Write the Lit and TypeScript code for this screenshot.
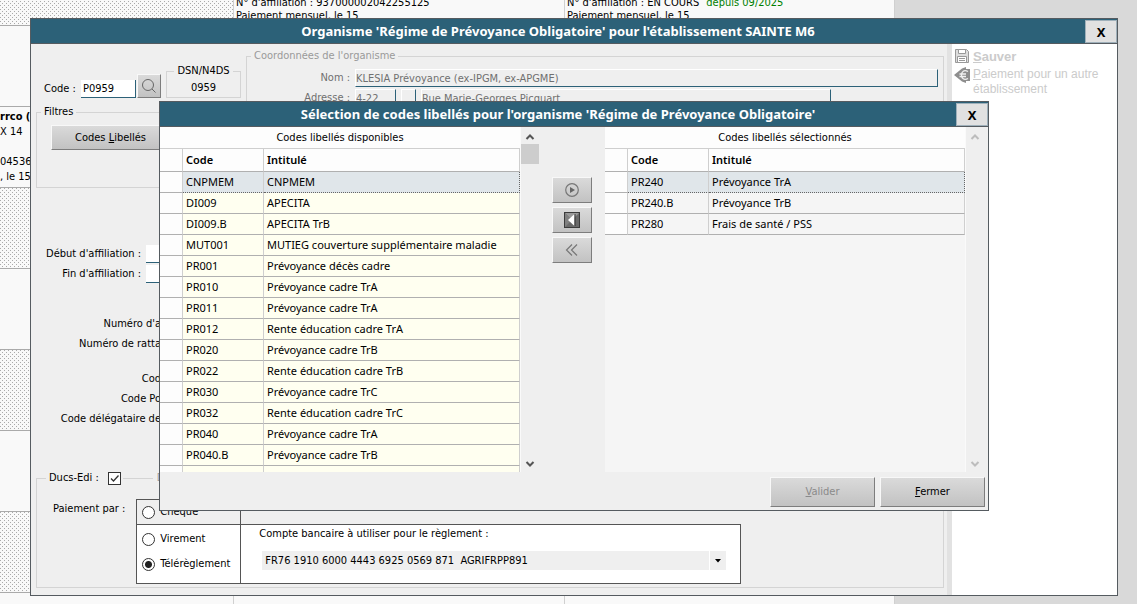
import { LitElement, html, css, nothing } from "lit";
import { customElement, property } from "lit/decorators.js";

type Row = [string, string];

const AVAILABLE: Row[] = [
  ["CNPMEM", "CNPMEM"],
  ["DI009", "APECITA"],
  ["DI009.B", "APECITA TrB"],
  ["MUT001", "MUTIEG couverture supplémentaire maladie"],
  ["PR001", "Prévoyance décès cadre"],
  ["PR010", "Prévoyance cadre TrA"],
  ["PR011", "Prévoyance cadre TrA"],
  ["PR012", "Rente éducation cadre TrA"],
  ["PR020", "Prévoyance cadre TrB"],
  ["PR022", "Rente éducation cadre TrB"],
  ["PR030", "Prévoyance cadre TrC"],
  ["PR032", "Rente éducation cadre TrC"],
  ["PR040", "Prévoyance cadre TrA"],
  ["PR040.B", "Prévoyance cadre TrB"],
  ["PR042", "Rente éducation cadre TrA"],
];

const SELECTED: Row[] = [
  ["PR240", "Prévoyance TrA"],
  ["PR240.B", "Prévoyance TrB"],
  ["PR280", "Frais de santé / PSS"],
];

const base = css`
  * { box-sizing: border-box; }
  button, input, select { font: inherit; color: inherit; margin: 0; border-radius: 0; }
  .push {
    border: 1px solid;
    border-color: #f8f8f8 #7d7d7d #7d7d7d #f8f8f8;
    background: linear-gradient(#dadada, #c2c2c2);
    padding: 0;
    display: flex;
    align-items: center;
    justify-content: center;
  }
  .titlebar {
    height: 25px;
    flex: none;
    display: flex;
    align-items: stretch;
    background: #2c6178;
    border-bottom: 1px solid #555b60;
    color: #fff;
  }
  .titlebar h1, .titlebar h2 {
    flex: 1;
    margin: 0;
    text-align: center;
    font: bold 13px/24px "Noto Sans", sans-serif;
  }
  .close {
    width: 32px;
    margin: 1px 0 0;
    padding: 0;
    border: 1px solid #9fb0ba;
    background: #e1e1e1;
    color: #000;
    font: bold 13px/20px "Noto Sans", sans-serif;
  }
`;

@customElement("code-grid")
class CodeGrid extends LitElement {
  @property() heading = "";
  @property({ attribute: false }) rows: Row[] = [];
  @property({ type: Boolean, reflect: true }) tinted = false;

  static styles = css`
    * { box-sizing: border-box; }
    :host { display: block; flex: 1; min-width: 0; overflow: hidden; background: #f5f5f5; border-right: 1px solid #fafafa; }
    table { width: 100%; table-layout: fixed; border-collapse: separate; border-spacing: 0; font: 11px/20px "Noto Sans", sans-serif; color: #000; }
    caption { height: 21px; background: #fdfdfd; font: 11px/21px "DejaVu Sans Condensed", "Noto Sans", sans-serif; }
    col.rail { width: 23px; }
    col.code { width: 81px; }
    th, td { padding: 0 0 0 3px; text-align: left; white-space: nowrap; overflow: hidden; border-right: 1px solid #cfcfcf; border-bottom: 1px solid #b0b0b0; }
    th { height: 24px; line-height: 20px; font-weight: 600; font-size: 11px; background: #fdfdfd; border-top: 1px solid #cfcfcf; }
    td { height: 21px; background: #f5f5f5; }
    td.rail, th.rail { background: #fdfdfd; }
    :host([tinted]) td:not(.rail) { background: #fffff0; }
    tr.current td:not(.rail), :host([tinted]) tr.current td:not(.rail) { background: #e0e6ea; border-bottom: 1px dotted #666; }
    tr.current td.end { border-right: 1px dotted #666; }
  `;

  render() {
    return html`<table>
      <caption>${this.heading}</caption>
      <colgroup><col class="rail" /><col class="code" /><col /></colgroup>
      <thead><tr><th class="rail"></th><th>Code</th><th>Intitulé</th></tr></thead>
      <tbody>
        ${this.rows.map(([code, label], i) => html`<tr class=${i === 0 ? "current" : ""}>
          <td class="rail"></td><td>${code}</td><td class="end">${label}</td>
        </tr>`)}
      </tbody>
    </table>`;
  }
}

@customElement("scroll-rail")
class ScrollRail extends LitElement {
  @property({ type: Boolean }) thumb = false;
  @property({ type: Boolean, reflect: true }) idle = false;

  static styles = css`
    :host { box-sizing: border-box; display: flex; flex-direction: column; align-items: center; width: 18px; flex: none; background: #efefef; color: #555; padding: 6px 0 4px; }
    :host([idle]) { color: #bdbdbd; }
    svg { display: block; flex: none; }
    .thumb { width: 18px; height: 20px; margin-top: 3px; background: #cdcdcd; }
    .space { flex: 1; }
  `;

  render() {
    return html`
      <svg width="10" height="8" viewBox="0 0 10 8"><path d="M1.5 6 5 2.5 8.500 6" fill="none" stroke="currentColor" stroke-width="2" /></svg>
      ${this.thumb ? html`<div class="thumb"></div>` : nothing}
      <div class="space"></div>
      <svg width="10" height="8" viewBox="0 0 10 8"><path d="M1.500 2 5 5.500 8.500 2" fill="none" stroke="currentColor" stroke-width="2" /></svg>
    `;
  }
}

@customElement("codes-dialog")
class CodesDialog extends LitElement {
  static styles = [base, css`
    :host { box-sizing: border-box; display: flex; flex-direction: column; border: 1px solid #555b60; background: #efefef; font: 11px/14px "DejaVu Sans Condensed", "Noto Sans", sans-serif; color: #000; }
    .lists { flex: 1; min-height: 0; display: flex; }
    .moves { width: 66px; flex: none; display: flex; flex-direction: column; gap: 4px; padding: 50px 13px 0; }
    .moves .push { width: 40px; height: 26px; }
    .right-rail { width: 22px; padding-right: 4px; }
    footer { display: flex; justify-content: flex-end; gap: 5px; padding: 5px 3px 3px; }
    footer .push { width: 105px; height: 30px; }
    footer .push:disabled { color: #8a8a8a; }
  `];

  render() {
    return html`
      <div class="titlebar">
        <h2>Sélection de codes libellés pour l'organisme 'Régime de Prévoyance Obligatoire'</h2>
        <button class="close" aria-label="Fermer la sélection">X</button>
      </div>
      <div class="lists">
        <code-grid tinted heading="Codes libellés disponibles" .rows=${AVAILABLE}></code-grid>
        <scroll-rail thumb></scroll-rail>
        <div class="moves">
          <button class="push" aria-label="Ajouter">
            <svg width="16" height="16" viewBox="0 0 16 16"><circle cx="8" cy="8" r="6.300" fill="none" stroke="#777" stroke-width="1.200" /><path d="M6 5v6l5-3z" fill="#666" /></svg>
          </button>
          <button class="push" aria-label="Retirer">
            <svg width="16" height="16" viewBox="0 0 16 16"><rect width="16" height="16" fill="#6a6a6a" /><path d="M0 0h16L8 8z" fill="#9a9a9a" /><path d="M0 0v16l8-8z" fill="#808080" /><rect x=".5" y=".5" width="15" height="15" fill="none" stroke="#3c3c3c" /><path d="M10.500 2v12L4 8z" fill="#fff" /><path d="M11 2v12" stroke="#333" /></svg>
          </button>
          <button class="push" aria-label="Tout retirer">
            <svg width="16" height="16" viewBox="0 0 16 16"><path d="M8 2.500 2.500 8 8 13.500M13 2.500 7.500 8 13 13.500" fill="none" stroke="#777" stroke-width="1.200" /></svg>
          </button>
        </div>
        <code-grid heading="Codes libellés sélectionnés" .rows=${SELECTED}></code-grid>
        <scroll-rail idle class="right-rail"></scroll-rail>
      </div>
      <footer>
        <button class="push" disabled><span><u>V</u>alider</span></button>
        <button class="push"><span><u>F</u>ermer</span></button>
      </footer>
    `;
  }
}

@customElement("organism-window")
class OrganismWindow extends LitElement {
  static styles = [base, css`
    :host { box-sizing: border-box; display: flex; flex-direction: column; border: 1px solid #555b60; background: #efefef; font: 11px/14px "DejaVu Sans Condensed", "Noto Sans", sans-serif; color: #000; white-space: nowrap; }
    .body { flex: 1; min-height: 0; display: flex; }
    .form { flex: 1; min-width: 0; display: flex; flex-direction: column; padding: 5px 3px 7px 5px; }
    .side { width: 170px; flex: none; background: #fff; border-left: 5px solid #e2e2e2; padding: 5px 0 0 2px; font: 12px/15px "Liberation Sans", sans-serif; color: #cbcbcb; }
    .side button { display: flex; gap: 3px; align-items: flex-start; padding: 0; border: 0; background: none; text-align: left; white-space: normal; }
    .side .save { font-size: 13px; font-weight: bold; height: 18px; }
    .side svg { flex: none; }
    fieldset { margin: 0; border: 1px solid #d4d4d4; padding: 0; min-width: 0; }
    legend { padding: 0 3px; }
    .top { display: flex; gap: 5px; }
    .ident { width: 205px; flex: none; padding-top: 15px; }
    .code-row { display: flex; align-items: flex-end; }
    .code-row label { width: 45px; padding: 0 0 2px 8px; }
    .edit { background: #fff; border: solid #2c6178; border-width: 0 1px 1px 0; padding: 0 0 0 2px; }
    .code-row .edit { width: 55px; height: 18px; }
    .code-row .push { width: 24px; height: 24px; margin-left: 1px; }
    .dsn { flex: 1; height: 34px; margin-left: 5px; padding-top: 3px; text-align: center; }
    .dsn legend { margin: 0 auto; }
    .filters { margin-top: 7px; height: 83px; padding: 6px 14px; }
    .filters legend { margin-left: -10px; }
    .filters .push { width: 119px; height: 25px; }
    .coord { flex: 1; height: 208px; padding-top: 6px; color: #707070; }
    .coord legend { margin-left: 4px; color: #9a9a9a; }
    .line { display: flex; padding-left: 28px; height: 20px; gap: 5px; padding-right: 5px; }
    .line label { width: 75px; text-align: right; padding: 2px 0 0 0; }
    .line .edit { background: #efefef; border-color: #fff #2c6178 #2c6178 #fff; border-width: 1px; height: 18px; color: #707070; padding: 0; }
    .grow { flex: 1; min-width: 0; }
    .number { width: 41px; }
    .bis { width: 15px; }
    .street { width: 410px; }
    .fields { margin-top: -13px; display: flex; flex-direction: column; gap: 1px; width: 250px; }
    .field { display: flex; align-items: center; height: 19px; gap: 5px; }
    .field label { width: 105px; text-align: right; }
    .field .edit { flex: 1; min-width: 0; height: 18px; }
    .field.long label { width: 125px; }
    .gap { margin-top: 30px; }
    .gap-small { margin-top: 15px; }
    .ducs { margin-top: auto; padding: 0 14px 3px 16px; }
    .ducs legend { display: flex; align-items: center; margin-left: -7px; }
    .ducs input { appearance: none; flex: none; background: #fff; border: 1px solid #333; display: grid; place-items: center; }
    .tick { width: 13px; height: 13px; }
    .check { display: grid; margin-left: 9px; }
    .check > * { grid-area: 1 / 1; }
    .dash { width: 30px; height: 1px; margin: 0 4px 0 2px; background: #d4d4d4; }
    .muted { color: #9a9a9a; }
    .pay { display: flex; gap: 11px; padding-top: 14px; }
    .pay > span { padding-top: 3px; }
    .choices { display: grid; grid-template-columns: 105px 500px; grid-template-rows: 25px 60px; }
    .cheque { border: solid #555; border-width: 1px 1px 0 1px; padding: 4px 0 0 5px; }
    .others { grid-row: 2; background: #fff; border: 1px solid #555; padding: 6px 0 0 5px; display: flex; flex-direction: column; gap: 9px; }
    .bank { grid-row: 2; grid-column: 2; background: #fff; border: 1px solid #555; border-left: 0; padding: 2px 14px 0 18px; }
    .radio { display: flex; align-items: center; gap: 5px; height: 16px; }
    .radio input { width: 13px; height: 13px; border-radius: 50%; }
    .radio input:checked { background: radial-gradient(circle, #222 0 3px, #fff 4px); }
    .combo { display: grid; margin: 10px 0 0 3px; height: 19px; }
    .combo > * { grid-area: 1 / 1; }
    select { appearance: none; width: 100%; border: 0; background: linear-gradient(90deg, #efefef calc(100% - 17px), #fff 0 calc(100% - 16px), #efefef 0); padding: 0 20px 0 3px; }
    .arrow { justify-self: end; align-self: center; margin-right: 5px; pointer-events: none; }
  `];

  render() {
    return html`
      <div class="titlebar">
        <h1>Organisme 'Régime de Prévoyance Obligatoire' pour l'établissement SAINTE M6</h1>
        <button class="close" aria-label="Fermer la fenêtre">X</button>
      </div>
      <div class="body">
        <div class="form">
          <div class="top">
            <div class="ident">
              <div class="code-row">
                <label for="code">Code :</label>
                <input id="code" class="edit" value="P0959" />
                <button class="push" aria-label="Rechercher">
                  <svg width="16" height="16" viewBox="0 0 16 16"><circle cx="7" cy="7" r="5.500" fill="none" stroke="#666" /><path d="m11 11 3.500 3.500" stroke="#666" /></svg>
                </button>
                <fieldset class="dsn"><legend>DSN/N4DS</legend>0959</fieldset>
              </div>
              <fieldset class="filters">
                <legend>Filtres</legend>
                <button class="push"><span>Codes <u>L</u>ibellés</span></button>
              </fieldset>
            </div>
            <fieldset class="coord">
              <legend>Coordonnées de l'organisme</legend>
              <div class="line">
                <label for="name">Nom :</label>
                <input id="name" class="edit grow" readonly value="KLESIA Prévoyance (ex-IPGM, ex-APGME)" />
              </div>
              <div class="line">
                <label for="number">Adresse :</label>
                <input id="number" class="edit number" readonly value="4-22" />
                <input class="edit bis" aria-label="Complément" readonly />
                <input class="edit street" aria-label="Voie" readonly value="Rue Marie-Georges Picquart" />
              </div>
            </fieldset>
          </div>
          <div class="fields">
            <div class="field"><label for="start">Début d'affiliation :</label><input id="start" class="edit" /></div>
            <div class="field"><label for="end">Fin d'affiliation :</label><input id="end" class="edit" /></div>
            <div class="field long gap"><label for="f1">Numéro d'a</label><input id="f1" class="edit" /></div>
            <div class="field long"><label for="f2">Numéro de ratta</label><input id="f2" class="edit" /></div>
            <div class="field long gap-small"><label for="f3">Cod</label><input id="f3" class="edit" /></div>
            <div class="field long"><label for="f4">Code Po</label><input id="f4" class="edit" /></div>
            <div class="field long"><label for="f5">Code délégataire de</label><input id="f5" class="edit" /></div>
          </div>
          <fieldset class="ducs">
            <legend>
              <label for="ducs">Ducs-Edi :</label>
              <span class="check">
                <input id="ducs" class="tick" type="checkbox" checked />
                <svg width="13" height="13" viewBox="0 0 13 13" pointer-events="none"><path d="M3 6.500 5.500 9 10.500 3.500" fill="none" stroke="#333" stroke-width="1.300" /></svg>
              </span>
              <span class="dash"></span><span class="muted">D</span>
            </legend>
            <div class="pay">
              <span>Paiement par :</span>
              <div class="choices">
                <div class="cheque"><label class="radio"><input type="radio" name="pay" />Chèque</label></div>
                <div class="others">
                  <label class="radio"><input type="radio" name="pay" />Virement</label>
                  <label class="radio"><input type="radio" name="pay" checked />Télérèglement</label>
                </div>
                <div class="bank">
                  <label for="bank">Compte bancaire à utiliser pour le règlement :</label>
                  <div class="combo">
                    <select id="bank"><option>FR76 1910 6000 4443 6925 0569 871&nbsp; AGRIFRPP891</option></select>
                    <svg class="arrow" width="6" height="4" viewBox="0 0 6 4"><path d="M0 0h6L3 3.500z" fill="#000" /></svg>
                  </div>
                </div>
              </div>
            </div>
          </fieldset>
        </div>
        <div class="side">
          <button class="save">
            <svg width="16" height="14" viewBox="0 0 16 14"><path d="M1.500.5h11l2 2v11h-13z" fill="#ddd" stroke="#999" /><path d="M4.500.5h7v4h-7zM3.500 7.500h9v6h-9z" fill="#fff" stroke="#999" /><path d="M5 9.500h6M5 11.500h6" stroke="#999" /></svg>
            <span><u>S</u>auver</span>
          </button>
          <button>
            <svg width="16" height="16" viewBox="0 0 16 16"><path d="M0 8 8 1.500 12 0v2h4v12h-4v2L8 14.500z" fill="#8e8e8e" /><path d="M14 4.500c-4-2-6.500 0-6.500 3.500s2.500 5.500 6.500 3.500M5.500 7H12M5.500 9.500H12" fill="none" stroke="#f2f2f2" stroke-width="1.300" /></svg>
            <span><u>P</u>aiement pour un autre établissement</span>
          </button>
        </div>
      </div>
    `;
  }
}

@customElement("app-root")
class AppRoot extends LitElement {
  static styles = css`
    * { box-sizing: border-box; }
    :host { display: block; position: relative; height: 100vh; overflow: hidden; background: #d9d9d9; font: 11px/13px "DejaVu Sans Condensed", "Noto Sans", sans-serif; color: #000; }
    .sheet { display: grid; grid-template-columns: 234px 331px 330px; grid-auto-rows: 81px; margin-top: -55px; width: 895px; background: #f9f9f9; white-space: nowrap; }
    .cell { border-right: 1px solid #d0d0d0; border-bottom: 1px solid #aaa; overflow: hidden; padding: 51px 2px 0; }
    .cell.hatched { background: #f9f9f9 url("data:image/svg+xml,%3Csvg xmlns='http://www.w3.org/2000/svg' width='4' height='4' shape-rendering='crispEdges'%3E%3Cpath d='M0 0h1v1H0zM2 2h1v1H2z' fill='%23aaa'/%3E%3C/svg%3E"); }
    .cell.note { padding: 2px 0 0; line-height: 15px; }
    .note div { display: flex; flex-direction: column; }
    .since { color: #008000; margin-left: 4px; }
    .parent { position: absolute; inset: 18px 19px 8px 30px; }
    .dialog { position: absolute; inset: 101px 148px 93px 159px; }
  `;

  render() {
    return html`
      <div class="sheet">
        <div class="cell hatched"></div>
        <div class="cell">N° d'affiliation : 937000002042255125<br />Paiement mensuel, le 15</div>
        <div class="cell">N° d'affiliation : EN COURS <span class="since">depuis 09/2025</span><br />Paiement mensuel, le 15</div>
        <div class="cell"></div><div class="cell"></div><div class="cell"></div>
        <div class="cell note"><div><b>rrco (I</b><span>X 14</span><br /><span>045367</span><span>, le 15</span></div></div><div class="cell"></div><div class="cell"></div>
        ${[0, 1, 2, 3, 4, 5].map((i) => html`<div class="cell ${i % 2 === 0 ? "hatched" : ""}"></div><div class="cell"></div><div class="cell"></div>`)}
      </div>
      <organism-window class="parent"></organism-window>
      <codes-dialog class="dialog"></codes-dialog>
    `;
  }
}
